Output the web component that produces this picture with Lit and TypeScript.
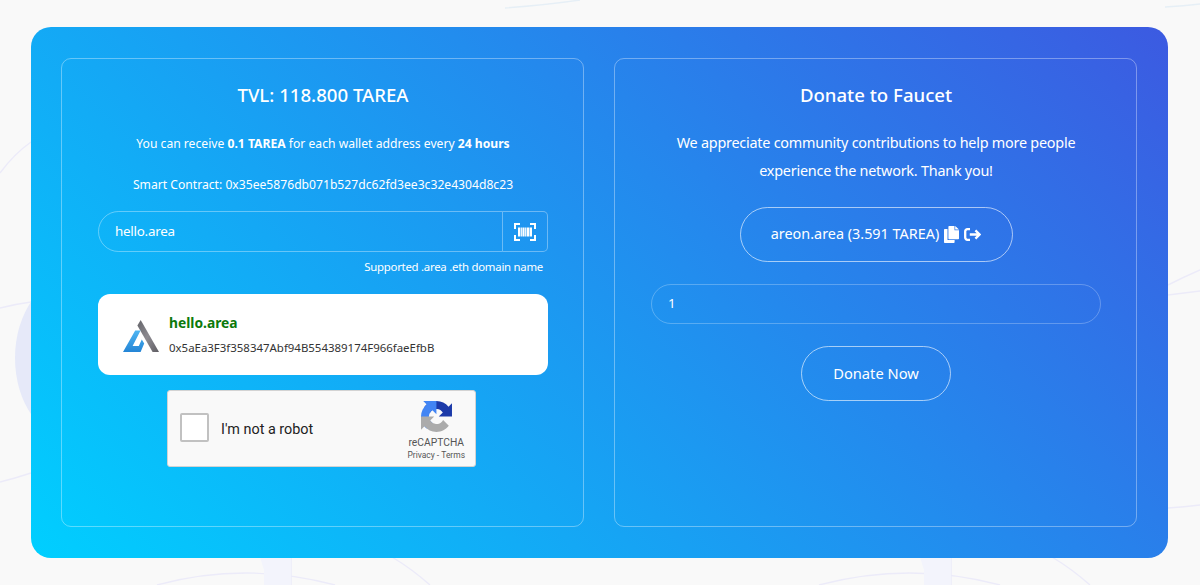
import { LitElement, css, html, svg } from "lit";
import { customElement } from "lit/decorators.js";

// Faint circles and orbit lines behind the faucet card
const backdrop = svg`
  <ellipse cx="74" cy="358" rx="59" ry="82" fill="#e6e9f9" />
  <g fill="none" stroke="#ecebf9" stroke-width="1.4">
    <path d="M0 173 Q14 154 31 142" />
    <path d="M0 308 Q16 304 31 302" />
    <path d="M0 482 Q16 478 31 473" />
    <path d="M157 585 Q245 561 335 585" />
    <path d="M819 585 Q910 561 1000 585" />
    <path d="M392 557 Q412 569 430 585" />
    <path d="M1052 557 Q1072 569 1090 585" />
    <path d="M291 557 V585 M951 557 V585" />
    <path d="M1168 285 Q1184 277 1200 270" />
    <path d="M1168 295 Q1184 293 1200 291" />
    <path d="M1168 508 Q1184 507 1200 505" />
  </g>
  <path d="M260 557 H291 V585 H264 V570 Z M920 557 H951 V585 H924 V570 Z" fill="#f3f4fc" />
  <g fill="none" stroke="#e6eff6" stroke-width="1.4">
    <path d="M505 8 Q545 5 580 0" />
    <path d="M1165 7 Q1184 6 1200 4" />
  </g>
`;

@customElement("app-root")
export class AppRoot extends LitElement {
  static styles = css`
    :host {
      position: relative;
      display: block;
      box-sizing: border-box;
      height: 585px;
      padding: 27px 32px 27px 31px;
      overflow: hidden;
      background: #f9f9f9;
      color: #fff;
      font-family: "Noto Sans", sans-serif;
    }

    * {
      box-sizing: border-box;
    }

    .backdrop {
      position: absolute;
      inset: 0;
      width: 1200px;
      height: 585px;
    }

    .card {
      position: relative;
      display: grid;
      grid-template-columns: 523px 523px;
      gap: 30px;
      height: 531px;
      padding: 31px 30px;
      border-radius: 20px;
      background: linear-gradient(45deg, #00cfff, #3c5ae1);
    }

    .panel {
      display: flex;
      flex-direction: column;
      align-items: center;
      padding: 0 35px 0 36px;
      border: 1px solid rgba(255, 255, 255, 0.35);
      border-radius: 10px;
    }

    .title {
      margin: 22px 0 0;
      font-size: 18.6px;
      font-weight: 500;
      line-height: 28px;
      white-space: nowrap;
    }

    .note {
      margin: 25px 0 0;
      font-size: 12.15px;
      line-height: 20px;
      white-space: nowrap;
    }

    .contract {
      margin-top: 21px;
    }

    .wallet {
      display: flex;
      width: 450px;
      height: 41px;
      margin-top: 16px;
    }

    .field {
      display: flex;
      align-items: center;
      border: 1px solid rgba(255, 255, 255, 0.35);
      padding: 0 16px 2px;
      font-size: 13.4px;
      letter-spacing: -0.25px;
    }

    .address {
      flex: 1;
      border-radius: 21px 0 0 21px;
    }

    .scan {
      display: flex;
      align-items: center;
      justify-content: center;
      width: 45px;
      padding-right: 1px;
      border: 1px solid rgba(255, 255, 255, 0.35);
      border-left: 0;
      border-radius: 0 5px 5px 0;
    }

    .hint {
      align-self: flex-end;
      margin: 6px 5px 0 0;
      font-size: 11.4px;
      letter-spacing: -0.26px;
      line-height: 18px;
    }

    .result {
      display: flex;
      align-items: center;
      width: 450px;
      height: 81px;
      margin-top: 18px;
      padding-left: 24px;
      border-radius: 12px;
      background: #fff;
      color: #333;
    }

    .logo {
      margin-top: 3px;
    }

    .result-text {
      display: flex;
      flex-direction: column;
      gap: 5px;
      margin: 2px 0 0 9px;
    }

    .name {
      color: #0b7a0b;
      font-size: 13.8px;
      font-weight: 700;
      line-height: 20px;
    }

    .hash {
      font-size: 11.45px;
      line-height: 20px;
    }

    .captcha {
      display: flex;
      align-items: center;
      width: 309px;
      height: 77px;
      margin: 15px 3px 0 0;
      padding: 0 10px 0 12px;
      border: 1px solid #d3d3d3;
      border-radius: 3px;
      background: #f9f9f9;
      color: #222;
      font-family: Roboto, sans-serif;
    }

    .check {
      width: 29px;
      height: 29px;
      margin-bottom: 3px;
      border: 2px solid #c1c1c1;
      border-radius: 2px;
      background: #fff;
    }

    .robot {
      flex: 1;
      margin: 1px 0 0 12px;
      font-size: 14.4px;
    }

    .brand {
      display: flex;
      flex-direction: column;
      align-items: center;
      margin-top: 5px;
      color: #555;
      font-size: 10.3px;
      line-height: 13px;
    }

    .brand svg {
      margin-bottom: 4px;
    }

    .legal {
      font-size: 8.45px;
      line-height: 12px;
    }

    .lead {
      margin: 20px 0 0;
      font-size: 14.4px;
      letter-spacing: -0.23px;
      line-height: 27.5px;
      text-align: center;
      white-space: nowrap;
    }

    .pill {
      display: flex;
      align-items: center;
      justify-content: center;
      height: 55px;
      border: 1px solid rgba(255, 255, 255, 0.6);
      border-radius: 28px;
      font-size: 14.4px;
      white-space: nowrap;
    }

    .pill-text {
      margin-bottom: 2px;
    }

    .donor {
      width: 273px;
      margin-top: 23px;
    }

    .donor svg {
      margin-left: 5px;
    }

    .amount {
      width: 450px;
      height: 40px;
      margin-top: 22px;
      border-radius: 20px;
      border-color: rgba(255, 255, 255, 0.25);
    }

    .donate {
      width: 150px;
      margin-top: 22px;
      font-size: 14.7px;
    }
  `;

  private renderClaim() {
    return html`
      <section class="panel">
        <h2 class="title">TVL: 118.800 TAREA</h2>
        <p class="note">
          You can receive <b>0.1 TAREA</b> for each wallet address every
          <b>24 hours</b>
        </p>
        <p class="note contract">
          Smart Contract: 0x35ee5876db071b527dc62fd3ee3c32e4304d8c23
        </p>
        <div class="wallet">
          <div class="field address">hello.area</div>
          <div class="scan">
            <svg width="22" height="18" viewBox="0 0 22 18" fill="#fff">
              <path d="M0 0h6v2H2v4H0zM16 0h6v6h-2V2h-4zM0 12h2v4h4v2H0zM20 12h2v6h-6v-2h4z" />
              <path d="M4 4.5h2.2v9H4zM6.7 4.5h1.2v9H6.7zM8.4 4.5h2.2v9H8.4zM11.1 4.5h1.2v9h-1.2zM12.8 4.5H15v9h-2.2zM15.5 4.5H18v9h-2.5z" />
            </svg>
          </div>
        </div>
        <p class="hint">Supported .area .eth domain name</p>
        <div class="result">
          <svg class="logo" width="38" height="34" viewBox="0 0 38 34">
            <defs>
              <linearGradient id="leg" x1="0" y1="0" x2="1" y2="1">
                <stop offset="0" stop-color="#64646a" />
                <stop offset="0.5" stop-color="#8d8b91" />
                <stop offset="1" stop-color="#5f5d63" />
              </linearGradient>
              <linearGradient id="foot" x1="0" y1="0" x2="0" y2="1">
                <stop offset="0" stop-color="#4db5f2" />
                <stop offset="1" stop-color="#2485d6" />
              </linearGradient>
            </defs>
            <path d="M18.7 1L37 33h-6.4L15.4 6.6z" fill="url(#leg)" />
            <path d="M13.2 11.5h5.4L10.6 27h6.2l3-6.4 2.4 4L18.6 33H1z" fill="url(#foot)" />
          </svg>
          <div class="result-text">
            <span class="name">hello.area</span>
            <span class="hash">0x5aEa3F3f358347Abf94B554389174F966faeEfbB</span>
          </div>
        </div>
        <div class="captcha">
          <span class="check"></span>
          <span class="robot">I'm not a robot</span>
          <div class="brand">
            <svg width="31" height="31" viewBox="0 0 64 64">
              <path fill="#1c3aa9" d="M64 31.955a33 33 0 0 0-.033-1.37V4.687l-7.16 7.16C50.948 4.674 42.033.093 32.05.093c-10.389 0-19.622 4.96-25.458 12.64l11.736 11.86a15.55 15.55 0 0 1 4.754-5.334c2.05-1.6 4.952-2.906 8.968-2.906.485 0 .86.057 1.135.163 4.976.393 9.288 3.14 11.828 7.124l-8.307 8.307L64 31.953" />
              <path fill="#4285f4" d="M31.862.094a33 33 0 0 0-1.37.033H4.594l7.16 7.16C4.58 13.147 0 22.06 0 32.046c0 10.388 4.96 19.622 12.64 25.458L24.5 45.768a15.55 15.55 0 0 1-5.334-4.754c-1.6-2.05-2.906-4.952-2.906-8.968 0-.485.057-.86.163-1.135.393-4.976 3.14-9.288 7.124-11.828l8.307 8.307L31.86.095" />
              <path fill="#ababab" d="M.001 32.045a33 33 0 0 0 .033 1.37v25.898l7.16-7.16c5.86 7.173 14.774 11.754 24.76 11.754 10.388 0 19.622-4.96 25.458-12.64l-11.736-11.86a15.55 15.55 0 0 1-4.754 5.334c-2.05 1.6-4.952 2.906-8.968 2.906-.485 0-.86-.057-1.135-.163-4.976-.393-9.288-3.14-11.828-7.124l8.307-8.307L.001 32.045" />
            </svg>
            <span>reCAPTCHA</span>
            <span class="legal">Privacy&nbsp;-&nbsp;Terms</span>
          </div>
        </div>
      </section>
    `;
  }

  private renderDonate() {
    return html`
      <section class="panel">
        <h2 class="title">Donate to Faucet</h2>
        <p class="lead">
          We appreciate community contributions to help more people<br />
          experience the network. Thank you!
        </p>
        <div class="pill donor">
          <span class="pill-text">areon.area (3.591 TAREA)</span>
          <svg width="15" height="17" viewBox="0 0 15 17" fill="#fff">
            <path d="M5.2 0h5.3v4.2H15v8.2a.8.8 0 0 1-.8.8H5.2a.8.8 0 0 1-.8-.8V.8a.8.8 0 0 1 .8-.8zM11.2 0L15 3.5h-3.8z" />
            <path d="M.8 3h2.7v11.1h7.1v2.1a.8.8 0 0 1-.8.8h-9a.8.8 0 0 1-.8-.8V3.8A.8.8 0 0 1 .8 3z" />
          </svg>
          <svg width="17" height="13" viewBox="0 0 17 13">
            <path d="M6 1.2H3.4a2.2 2.2 0 0 0-2.2 2.2v6.2a2.2 2.2 0 0 0 2.2 2.2H6M5.8 6.5h9.4M11.4 2.4l4.2 4.1-4.2 4.1" fill="none" stroke="#fff" stroke-width="2.3" />
          </svg>
        </div>
        <div class="field amount">1</div>
        <div class="pill donate"><span class="pill-text">Donate Now</span></div>
      </section>
    `;
  }

  render() {
    return html`
      <svg class="backdrop" viewBox="0 0 1200 585">${backdrop}</svg>
      <main class="card">${this.renderClaim()} ${this.renderDonate()}</main>
    `;
  }
}
